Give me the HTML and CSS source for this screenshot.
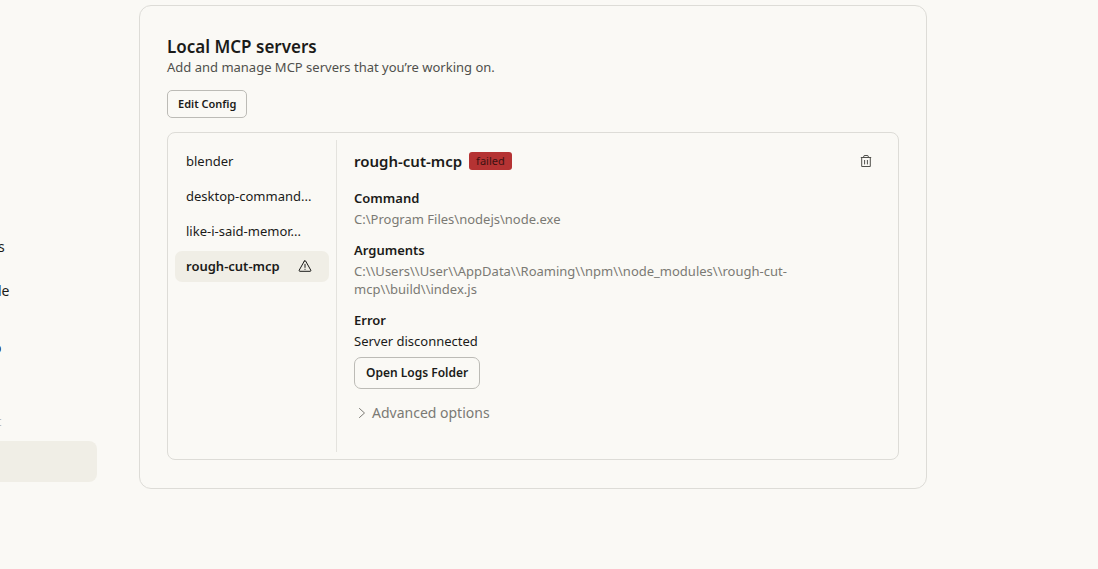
FILE: index.html
```html
<!DOCTYPE html>
<html lang="en">
<head>
<meta charset="utf-8">
<meta name="viewport" content="width=device-width, initial-scale=1">
<title>Local MCP servers</title>
<link rel="stylesheet" href="styles.css">
</head>
<body>
<div class="page">
  <nav class="sidebar" aria-label="Settings">
    <a class="side-link first" href="#">s</a>
    <a class="side-link second" href="#">de</a>
    <a class="side-link third" href="#">o</a>
    <span class="side-label">t</span>
    <a class="side-current" href="#" aria-label="Developer" aria-current="page"></a>
  </nav>
  <main class="panel">
    <h1 class="title">Local MCP servers</h1>
    <p class="intro">Add and manage MCP servers that you’re working on.</p>
    <button class="button small" type="button">Edit Config</button>
    <div class="servers">
      <div class="list">
        <button class="server" type="button">blender</button>
        <button class="server" type="button">desktop-command...</button>
        <button class="server" type="button">like-i-said-memor...</button>
        <button class="server selected" type="button">rough-cut-mcp
          <svg class="warning" viewBox="0 0 14 14" fill="none" stroke="currentColor" stroke-linejoin="round" stroke-linecap="round" aria-hidden="true"><path d="M6.4 2 1.2 11.2Q.8 12.2 1.8 12.3H12.2Q13.2 12.2 12.8 11.2L7.6 2Q7 1.2 6.4 2Z"/><path d="M7 5.3V8.4M7 10.2V10.4"/></svg>
        </button>
      </div>
      <section class="detail">
        <div class="detail-head">
          <h2 class="name">rough-cut-mcp</h2>
          <span class="badge">failed</span>
          <button class="delete" type="button" aria-label="Delete server">
            <svg class="trash" viewBox="0 0 12 14" fill="none" stroke="currentColor" aria-hidden="true"><path d="M.8 3.5H11.2M3.5 3.2 4.2 1.5H7.8L8.5 3.2M1.7 3.5V12.5H10.3V3.5M4.6 6V10.4M7.4 6V10.4"/></svg>
          </button>
        </div>
        <dl class="fields">
          <div class="field"><dt class="term">Command</dt><dd class="value">C:\Program Files\nodejs\node.exe</dd></div>
          <div class="field"><dt class="term">Arguments</dt><dd class="value">C:\\Users\\User\\AppData\\Roaming\\npm\\node_modules\\rough-cut-mcp\\build\\index.js</dd></div>
          <div class="field"><dt class="term">Error</dt><dd class="value strong">Server disconnected</dd></div>
        </dl>
        <button class="button logs" type="button">Open Logs Folder</button>
        <button class="advanced" type="button" aria-expanded="false">
          <svg class="chevron" viewBox="0 0 8 12" fill="none" stroke="currentColor" stroke-linecap="round" stroke-linejoin="round" aria-hidden="true"><path d="M1.5 1.5 6.5 6 1.5 10.5"/></svg>
          Advanced options
        </button>
      </section>
    </div>
  </main>
</div>
</body>
</html>
```
FILE: styles.css
```css
* { box-sizing: border-box; }
body {
  margin: 0;
  background: #faf9f5;
  color: #1b1b19;
  font: 13px/18px "Noto Sans", "Liberation Sans", sans-serif;
}
button {
  font: inherit;
  color: inherit;
  background: none;
  border: 0;
  padding: 0;
  cursor: pointer;
}
h1, h2, p, dl, dd { margin: 0; }
.page {
  display: flex;
  align-items: flex-start;
  gap: 42px;
  padding: 5px 171px 0 0;
}
.sidebar {
  flex: 0 0 97px;
  display: flex;
  flex-direction: column;
  overflow: hidden;
  padding-top: 232px;
}
.side-link, .side-label {
  color: inherit;
  text-decoration: none;
  font-size: 14px;
  line-height: 20px;
}
.first { margin: 0 0 24px -2px; }
.second { margin: 0 0 37px -7px; }
.third { margin: 0 0 54px -7px; }
.side-label {
  margin: 0 0 9px -3px;
  font-size: 12px;
  color: #bcbab2;
}
.side-current {
  height: 41px;
  border-radius: 0 8px 8px 0;
  background: #f0eee6;
}
.panel {
  flex: 1;
  min-width: 0;
  border: 1px solid #dddcd7;
  border-radius: 12px;
  padding: 30px 27px 28px;
}
.title { font-size: 17px; line-height: 21px; font-weight: 600; }
.intro { line-height: 20px; color: #50504c; }
.button {
  display: block;
  height: 32px;
  padding: 0 10px;
  border: 1px solid #bcbbb6;
  border-radius: 7px;
  font-weight: 600;
}
.logs { padding: 0 11px; font-size: 12px; }
.small {
  height: 28px;
  margin: 13px 0 14px;
  border-radius: 5px;
  font-size: 11px;
}
.servers {
  display: flex;
  border: 1px solid #dddcd7;
  border-radius: 8px;
  padding: 7px;
}
.list {
  flex: 0 0 162px;
  display: flex;
  flex-direction: column;
  gap: 4px;
  padding: 6px 7px 0 0;
  border-right: 1px solid #e4e3de;
}
.server {
  display: flex;
  align-items: center;
  justify-content: space-between;
  height: 31px;
  padding: 0 17px 1px 11px;
  border-radius: 7px;
  white-space: nowrap;
}
.selected { background: #f0eee6; font-weight: 600; }
.warning { width: 14px; height: 14px; }
.detail { flex: 1; min-width: 0; padding: 10px 19px 29px 17px; }
.detail-head {
  display: flex;
  align-items: center;
  gap: 7px;
  margin-bottom: 17px;
}
.name { font-size: 15px; line-height: 22px; font-weight: 600; }
.badge {
  padding: 0 7px;
  border-radius: 3px;
  background: #b53333;
  color: #3d1212;
  font-size: 11px;
}
.delete { display: flex; margin-left: auto; color: #50504c; }
.trash { width: 12px; height: 14px; }
.fields { display: grid; gap: 13px; margin-bottom: 7px; }
.term { font-weight: 600; margin-bottom: 3px; }
.value { max-width: 448px; color: #7b7a74; }
.strong { color: inherit; }
.advanced {
  display: flex;
  align-items: center;
  gap: 6px;
  margin-top: 14px;
  padding-left: 4px;
  font-size: 14px;
  line-height: 20px;
  color: #7b7a74;
}
.chevron { width: 8px; height: 12px; }
```
